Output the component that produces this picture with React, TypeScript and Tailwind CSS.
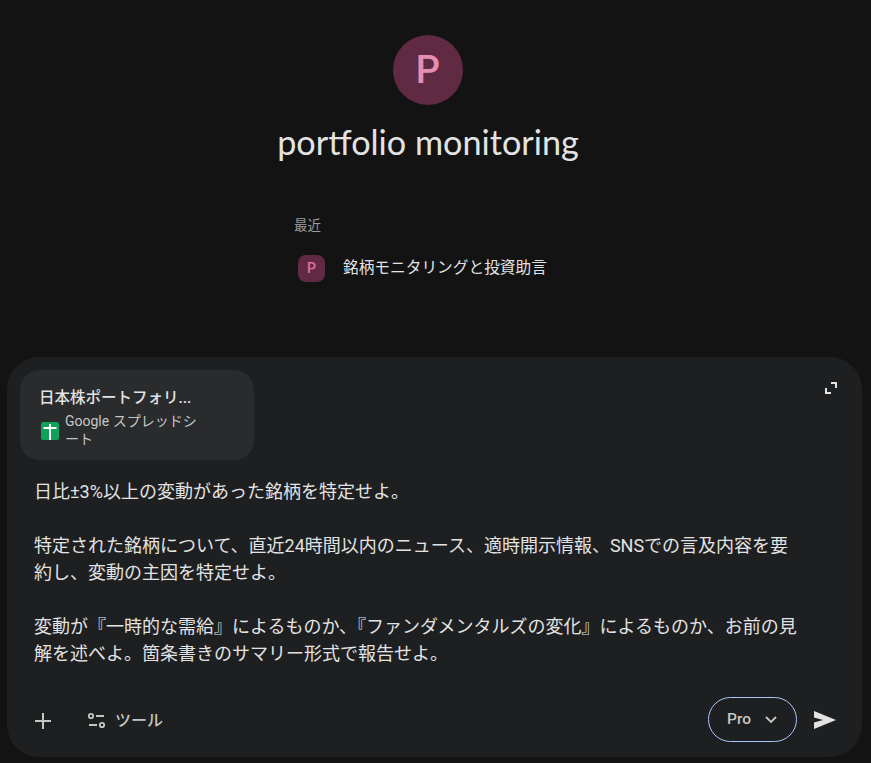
import React from "react";

const cjk = "font-['Roboto','Noto_Sans_CJK_JP',sans-serif]";

export default function App() {
  return (
    <div className={`h-[763px] w-[871px] overflow-hidden bg-[#131314] ${cjk}`}>
      <div className="flex w-[856px] flex-col items-center">
        <div className="mt-[35px] flex h-[70px] w-[70px] items-center justify-center rounded-full bg-[#5f2a42] text-[38px] font-medium leading-none text-[#e68fb3]">
          P
        </div>
        <h1 className="mt-[17px] h-[40px] text-[34.2px] leading-[40px] whitespace-nowrap text-[#e3e3e3] font-['Lato',sans-serif]">portfolio monitoring</h1>
      </div>

      <div className="ml-[294px] mt-[52px] flex w-[283px] flex-col">
        <div className="h-[22px] text-[13.5px] leading-[22px] text-[#9a9b9c]">最近</div>
        <div className="mt-[18px] flex h-[28px] items-center">
          <div className="ml-[4px] flex h-[27px] w-[27px] items-center justify-center rounded-[8px] bg-[#5f2a42] text-[14px] font-medium text-[#e0719f]">P</div>
          <div className="ml-[18px] text-[15.7px] whitespace-nowrap text-[#e3e3e3]">銘柄モニタリングと投資助言</div>
        </div>
      </div>

      <div className="ml-[7px] mt-[75px] flex h-[400px] w-[855px] flex-col rounded-[32px] bg-[#1e1f21]">
        <div className="flex justify-between pl-[13px] pr-[24px] pt-[13px]">
          <div className="flex h-[90px] w-[234px] flex-col rounded-[20px] bg-[#2a2b2d] pl-[19px] pt-[18px]">
            <div className="text-[15.5px] font-medium leading-[20px] text-[#e3e3e3]">日本株ポートフォリ...</div>
            <div className="mt-[4px] flex items-start">
              <svg viewBox="0 0 18 18" className="ml-[2px] mt-[10px] h-[18px] w-[18px] shrink-0">
                <rect width="18" height="18" rx="2" fill="#10a15a" />
                <path d="M8 2h2v3h5.500v2H10v11H8V7H2.500V5H8z" fill="#fff" />
              </svg>
              <div className="ml-[6px] w-[135px] text-[14px] leading-[18px] text-[#c4c7c5]">Google スプレッドシート</div>
            </div>
          </div>
          <svg viewBox="0 0 14 14" className="mt-[11px] h-[14px] w-[14px]" fill="none" stroke="#e3e3e3" strokeWidth="2">
            <path d="M7 2h5v5" />
            <path d="M2 7v5h5" />
          </svg>
        </div>

        <div className="mt-[18px] pl-[27px] pr-[60px] text-[18px] leading-[27px] text-[#e3e3e3]">
          <p>日比±3%以上の変動があった銘柄を特定せよ。</p>
          <p className="mt-[27px]">特定された銘柄について、直近24時間以内のニュース、適時開示情報、SNSでの言及内容を要約し、変動の主因を特定せよ。</p>
          <p className="mt-[27px]">変動が『一時的な需給』によるものか、『ファンダメンタルズの変化』によるものか、お前の見解を述べよ。箇条書きのサマリー形式で報告せよ。</p>
        </div>

        <div className="mb-[15px] mt-auto flex h-[45px] items-center pl-[27px] pr-[26px]">
          <div className="mt-[2px] flex items-center">
            <svg viewBox="0 0 18 18" className="h-[18px] w-[18px]" fill="none" stroke="#c4c7c5" strokeWidth="2">
              <path d="M9 1v16M1 9h16" />
            </svg>
            <svg viewBox="0 0 20 18" className="ml-[35px] h-[18px] w-[20px]" fill="none" stroke="#c4c7c5" strokeWidth="1.800">
              <circle cx="4" cy="4" r="2.200" />
              <path d="M9 4h8M2 13h8" />
              <circle cx="15" cy="13" r="2.200" />
            </svg>
            <span className="ml-[8px] mt-[1px] text-[16px] font-medium text-[#c4c7c5]">ツール</span>
          </div>
          <div className="ml-auto flex h-[45px] w-[89px] items-center rounded-full border border-[#a8c7fa] pl-[18px]">
            <span className="text-[15.5px] font-medium text-[#c4c7c5]">Pro</span>
            <svg viewBox="0 0 12 8" className="ml-[14px] h-[8px] w-[12px]" fill="none" stroke="#c4c7c5" strokeWidth="1.800">
              <path d="M1 1l5 5 5-5" />
            </svg>
          </div>
          <svg viewBox="0 0 22 18" className="ml-[17px] h-[18px] w-[22px]" fill="#e3e3e3">
            <path d="M0 0l22 9L0 18V11.500L9 9 0 6.500z" />
          </svg>
        </div>
      </div>
    </div>
  );
}
